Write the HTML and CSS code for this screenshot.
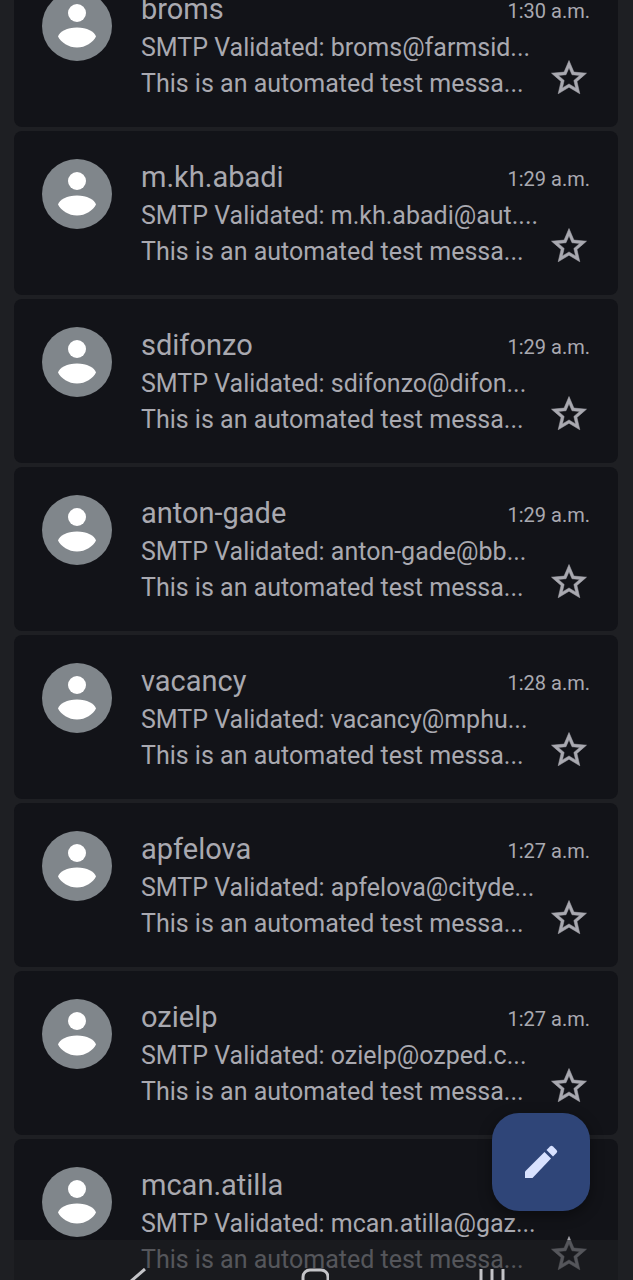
FILE: index.html
```html
<!DOCTYPE html>
<html lang="en">
<head>
  <meta charset="UTF-8">
  <meta name="viewport" content="width=device-width, initial-scale=1.0">
  <title>Inbox</title>
  <link rel="stylesheet" href="styles.css">
</head>
<body>
  <!-- Shared icons -->
  <svg class="icons">
    <symbol id="person" viewBox="0 0 70 70">
      <circle cx="35" cy="22" r="9" />
      <path d="M16 45.500C17.500 40.500 25 36.500 35 36.500S52.500 40.500 54 45.500C51 51.500 43.500 56.500 35 56.500S19 51.500 16 45.500Z" />
    </symbol>
    <symbol id="star" viewBox="0 0 24 24">
      <path d="M22 9.240l-7.190-.62L12 2 9.190 8.630 2 9.240l5.460 4.730L5.820 21 12 17.270 18.180 21l-1.630-7.030L22 9.240zM12 15.400l-3.760 2.270 1-4.280-3.320-2.880 4.380-.38L12 6.100l1.710 4.040 4.380.38-3.320 2.880 1 4.280L12 15.400z" />
    </symbol>
  </svg>

  <main class="inbox">
    <ul class="mail-list">
      <li class="mail">
        <svg class="avatar"><use href="#person" /></svg>
        <div class="mail-body">
          <div class="mail-head"><h2 class="sender">broms</h2><time class="time">1:30 a.m.</time></div>
          <div class="mail-main">
            <div class="mail-text">
              <p>SMTP Validated: broms@farmsid...</p>
              <p>This is an automated test messa...</p>
            </div>
            <button class="star" aria-label="Star"><svg><use href="#star" /></svg></button>
          </div>
        </div>
      </li>
      <li class="mail">
        <svg class="avatar"><use href="#person" /></svg>
        <div class="mail-body">
          <div class="mail-head"><h2 class="sender">m.kh.abadi</h2><time class="time">1:29 a.m.</time></div>
          <div class="mail-main">
            <div class="mail-text">
              <p>SMTP Validated: m.kh.abadi@aut....</p>
              <p>This is an automated test messa...</p>
            </div>
            <button class="star" aria-label="Star"><svg><use href="#star" /></svg></button>
          </div>
        </div>
      </li>
      <li class="mail">
        <svg class="avatar"><use href="#person" /></svg>
        <div class="mail-body">
          <div class="mail-head"><h2 class="sender">sdifonzo</h2><time class="time">1:29 a.m.</time></div>
          <div class="mail-main">
            <div class="mail-text">
              <p>SMTP Validated: sdifonzo@difon...</p>
              <p>This is an automated test messa...</p>
            </div>
            <button class="star" aria-label="Star"><svg><use href="#star" /></svg></button>
          </div>
        </div>
      </li>
      <li class="mail">
        <svg class="avatar"><use href="#person" /></svg>
        <div class="mail-body">
          <div class="mail-head"><h2 class="sender">anton-gade</h2><time class="time">1:29 a.m.</time></div>
          <div class="mail-main">
            <div class="mail-text">
              <p>SMTP Validated: anton-gade@bb...</p>
              <p>This is an automated test messa...</p>
            </div>
            <button class="star" aria-label="Star"><svg><use href="#star" /></svg></button>
          </div>
        </div>
      </li>
      <li class="mail">
        <svg class="avatar"><use href="#person" /></svg>
        <div class="mail-body">
          <div class="mail-head"><h2 class="sender">vacancy</h2><time class="time">1:28 a.m.</time></div>
          <div class="mail-main">
            <div class="mail-text">
              <p>SMTP Validated: vacancy@mphu...</p>
              <p>This is an automated test messa...</p>
            </div>
            <button class="star" aria-label="Star"><svg><use href="#star" /></svg></button>
          </div>
        </div>
      </li>
      <li class="mail">
        <svg class="avatar"><use href="#person" /></svg>
        <div class="mail-body">
          <div class="mail-head"><h2 class="sender">apfelova</h2><time class="time">1:27 a.m.</time></div>
          <div class="mail-main">
            <div class="mail-text">
              <p>SMTP Validated: apfelova@cityde...</p>
              <p>This is an automated test messa...</p>
            </div>
            <button class="star" aria-label="Star"><svg><use href="#star" /></svg></button>
          </div>
        </div>
      </li>
      <li class="mail">
        <svg class="avatar"><use href="#person" /></svg>
        <div class="mail-body">
          <div class="mail-head"><h2 class="sender">ozielp</h2><time class="time">1:27 a.m.</time></div>
          <div class="mail-main">
            <div class="mail-text">
              <p>SMTP Validated: ozielp@ozped.c...</p>
              <p>This is an automated test messa...</p>
            </div>
            <button class="star" aria-label="Star"><svg><use href="#star" /></svg></button>
          </div>
        </div>
      </li>
      <li class="mail">
        <svg class="avatar"><use href="#person" /></svg>
        <div class="mail-body">
          <div class="mail-head"><h2 class="sender">mcan.atilla</h2></div>
          <div class="mail-main">
            <div class="mail-text">
              <p>SMTP Validated: mcan.atilla@gaz...</p>
              <p>This is an automated test messa...</p>
            </div>
            <button class="star" aria-label="Star"><svg><use href="#star" /></svg></button>
          </div>
        </div>
      </li>
    </ul>
  </main>

  <button class="compose" aria-label="Compose">
    <svg viewBox="0 0 34 34">
      <path d="M1 26.500L20.500 7 27 13.500 8.500 33H1Z" />
      <path d="M22.500 5L26 1.500Q27.500 0 29 1.500L32.500 5Q34 6.500 32.500 8L29 11.500Z" />
    </svg>
  </button>

  <!-- System navigation, mostly below the fold -->
  <nav class="system-nav">
    <button aria-label="Back"><svg viewBox="0 0 28 28"><path d="M21 1L6 14 21 27" /></svg></button>
    <button aria-label="Home"><svg viewBox="0 0 28 28"><rect x="2" y="2" width="25" height="25" rx="7" /></svg></button>
    <button aria-label="Recent apps"><svg viewBox="0 0 28 28"><path d="M3 1V27M14 1V27M25 1V27" /></svg></button>
  </nav>
</body>
</html>
```
FILE: styles.css
```css
* {
  box-sizing: border-box;
}
body {
  margin: 0;
  height: 100vh;
  overflow: hidden;
  background-color: #1e1f23;
  color: #a9a9b0;
  font-family: Roboto, "Liberation Sans", sans-serif;
}
button {
  padding: 0;
  border: none;
  background: none;
  color: inherit;
  cursor: pointer;
}
svg {
  display: block;
  fill: currentColor;
}
.icons {
  display: none;
}

/* Message list, scrolled part way through its first card */
.inbox {
  height: 100vh;
  overflow: hidden;
  padding: 0 15px 0 14px;
}
.mail-list {
  display: flex;
  flex-direction: column;
  gap: 4px;
  margin: -37px 0 0;
  padding: 0;
  list-style: none;
}
.mail {
  display: flex;
  gap: 29px;
  padding: 28px 28px 25px;
  border-radius: 8px;
  background-color: #121318;
}
.avatar {
  flex: none;
  width: 70px;
  height: 70px;
  border-radius: 50%;
  background-color: #80868b;
  color: #fff;
}
.mail-body {
  flex: 1;
  min-width: 0;
}
.mail-head {
  display: flex;
  justify-content: space-between;
  align-items: flex-end;
  margin-bottom: 3px;
}
.sender {
  margin: 0;
  font-size: 29px;
  font-weight: 400;
  line-height: 36px;
}
.time {
  font-size: 20px;
  line-height: 32px;
}
.mail-main {
  display: flex;
  justify-content: space-between;
  align-items: flex-end;
}
.mail-text {
  min-width: 0;
  font-size: 25px;
  line-height: 36px;
  white-space: nowrap;
}
.mail-text p {
  margin: 0;
}
.star {
  padding-bottom: 3px;
}
.star svg {
  width: 42px;
  height: 42px;
  stroke: currentColor;
  stroke-width: 0.3;
}

.compose {
  position: fixed;
  right: 43px;
  bottom: 69px;
  display: grid;
  place-items: center;
  width: 98px;
  height: 98px;
  border-radius: 27px;
  background-color: #2f4578;
  color: #d9e2ff;
  box-shadow: 0 4px 14px rgba(0, 0, 0, 0.4);
}
.compose svg {
  width: 34px;
  height: 34px;
}

.system-nav {
  position: fixed;
  left: 0;
  right: 0;
  bottom: 0;
  display: flex;
  justify-content: space-between;
  align-items: flex-start;
  height: 40px;
  padding: 28px 127px 0 124px;
  overflow: hidden;
  background-color: rgba(30, 31, 35, 0.6);
  color: #c4c4c8;
}
.system-nav svg {
  width: 28px;
  height: 28px;
  fill: none;
  stroke: currentColor;
  stroke-width: 3;
}
```
